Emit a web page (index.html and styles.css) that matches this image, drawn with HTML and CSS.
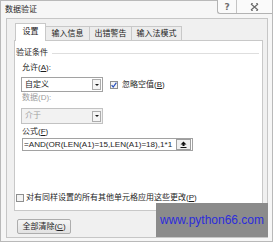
FILE: index.html
```html
<!DOCTYPE html>
<html lang="zh">
<head>
<meta charset="utf-8">
<link rel="stylesheet" href="styles.css">
</head>
<body>
<div class="window">
  <div class="titlebar">
    <span class="title">数据验证</span>
    <div class="caption">
      <span class="cap help">?</span>
      <span class="cap close"><svg width="9" height="8" viewBox="0 0 9 8"><path d="M1 1 L8 7 M8 1 L1 7" stroke="#6a6a6a" stroke-width="1.2" fill="none"/><path d="M1 0.5h2M6 0.5h2M1 7.5h2M6 7.5h2" stroke="#8a8a8a" stroke-width="1" fill="none"/></svg></span>
    </div>
  </div>
  <div class="client">
    <div class="tabs">
      <div class="tab active w1">设置</div>
      <div class="tab w2">输入信息</div>
      <div class="tab w3">出错警告</div>
      <div class="tab w4">输入法模式</div>
    </div>
    <div class="panel">
      <div class="group"><span>验证条件</span><i class="rule"></i></div>
      <div class="label">允许(<u>A</u>):</div>
      <div class="row">
        <div class="combo"><span class="val">自定义</span><b class="arrow"><i class="tri"></i></b></div>
        <div class="check"><span class="box"><svg width="6" height="6" viewBox="0 0 6 6"><path d="M0.6 3.2 L2.2 5 L5.4 0.6" stroke="#2a52be" stroke-width="1.2" fill="none"/></svg></span><span>忽略空值(<u>B</u>)</span></div>
      </div>
      <div class="label dim">数据(D):</div>
      <div class="combo disabled"><span class="val">介于</span><b class="arrow"><i class="tri"></i></b></div>
      <div class="label low">公式(<u>F</u>)</div>
      <div class="refedit"><span class="formula">=AND(OR(LEN(A1)=15,LEN(A1)=18),1*1</span><b class="collapse"><svg width="7" height="7" viewBox="0 0 7 7"><path d="M3.5 0.5 L6.5 3.5 H4.5 V5 H2.5 V3.5 H0.5 Z" fill="#111"/><path d="M0.5 6.5 H6.5" stroke="#111" stroke-width="1"/></svg></b></div>
      <div class="check apply"><span class="box"></span><span>对有同样设置的所有其他单元格应用这些更改(<u>P</u>)</span></div>
    </div>
    <div class="footer"><span class="btn">全部清除(<u>C</u>)</span></div>
  </div>
  <div class="watermark">www.python66.com</div>
</div>
</body>
</html>
```
FILE: styles.css
```css
* { box-sizing: border-box; }
html, body { margin: 0; padding: 0; }
body {
  width: 273px;
  height: 242px;
  overflow: hidden;
  background: #ffffff;
  font-family: "Liberation Sans", "Noto Sans CJK SC", sans-serif;
  font-size: 8px;
  color: #1e1e1e;
}
u { text-decoration: underline; text-underline-offset: 1px; }

.window {
  position: relative;
  width: 273px;
  height: 242px;
  border: 1px solid #b9b9b9;
  background: #f6f6f6;
  padding: 0 4px 3px 5px;
  display: flex;
  flex-direction: column;
}

.titlebar {
  height: 17px;
  display: flex;
  align-items: flex-start;
  justify-content: space-between;
}
.title {
  margin-top: 4px;
  margin-left: -1px;
  line-height: 10px;
  color: #262626;
}
.caption {
  display: flex;
  margin-top: -1px;
  margin-right: -4px;
  height: 14px;
  border: 1px solid #b3b3b3;
  border-top: none;
  border-right: none;
  border-radius: 0 0 0 3px;
  background: #fafafa;
}
.cap {
  display: flex;
  align-items: center;
  justify-content: center;
  height: 100%;
}
.help {
  width: 19px;
  border-right: 1px solid #c4c4c4;
  color: #6e6e6e;
  font-family: "DejaVu Sans", sans-serif;
  font-size: 9px;
  font-weight: bold;
}
.close { width: 35px; }

.client {
  flex: 1;
  border: 1px solid #c6c6c6;
  background: #f0f0f0;
  padding: 4px 4px 0 7px;
  display: flex;
  flex-direction: column;
}

.tabs {
  display: flex;
  align-items: flex-end;
  height: 17px;
  margin-left: 1px;
  position: relative;
  z-index: 1;
}
.tab {
  height: 14px;
  margin-left: -1px;
  border: 1px solid #c8c8c8;
  border-bottom: none;
  background: #ececec;
  line-height: 13px;
  text-align: center;
  color: #202020;
}
.tab:first-child { margin-left: 0; }
.tab.active {
  height: 18px;
  margin-bottom: -1px;
  background: #ffffff;
  line-height: 15px;
  position: relative;
  z-index: 2;
}
.w1 { width: 31px; }
.w2 { width: 45px; }
.w3 { width: 43px; }
.w4 { width: 51px; }

.panel {
  width: 249px;
  height: 171px;
  border: 1px solid #c8c8c8;
  background: #ffffff;
  padding: 0 0 0 7px;
  display: flex;
  flex-direction: column;
}

.group {
  display: flex;
  align-items: center;
  margin: 7px 3px 0 -6px;
  height: 10px;
  line-height: 10px;
}
.rule {
  flex: 1;
  height: 1px;
  background: #dedede;
  margin-left: 4px;
}

.label {
  margin-top: 5px;
  line-height: 10px;
  height: 10px;
}
.label.dim { margin-top: 1px; color: #9c9c9c; }
.label.low { margin-top: 3px; }

.row {
  display: flex;
  align-items: center;
  margin-top: 4px;
  height: 15px;
}

.combo {
  width: 82px;
  height: 15px;
  margin-left: -1px;
  border: 1px solid #a2a2a2;
  background: #ffffff;
  display: flex;
  align-items: center;
  justify-content: space-between;
  padding: 0 1px 0 3px;
}
.combo.disabled {
  margin-top: 5px;
  height: 16px;
  border-color: #c2c2c2;
  background: #f2f2f2;
  color: #a0a0a0;
}
.val { line-height: 10px; }
.arrow {
  width: 9px;
  height: 11px;
  border: 1px solid #acacac;
  background: #f4f4f4;
  display: flex;
  align-items: center;
  justify-content: center;
}
.tri {
  width: 0;
  height: 0;
  border-left: 2px solid transparent;
  border-right: 2px solid transparent;
  border-top: 2px solid #1a1a1a;
}

.check {
  display: flex;
  align-items: center;
  margin-left: 7px;
  line-height: 10px;
}
.box {
  width: 8px;
  height: 8px;
  border: 1px solid #8e8f8f;
  background: #f4f4f4;
  margin-right: 4px;
  display: flex;
  align-items: center;
  justify-content: center;
}
.apply {
  margin: auto 0 7px -6px;
}
.apply .box { margin-right: 2px; }

.refedit {
  margin-top: 1px;
  width: 171px;
  height: 13px;
  border: 1px solid #a2a2a2;
  background: #ffffff;
  display: flex;
  align-items: center;
  padding-left: 1px;
  padding-right: 1px;
}
.formula {
  flex: 1;
  overflow: hidden;
  white-space: nowrap;
  line-height: 10px;
  font-size: 8.1px;
}
.collapse {
  width: 15px;
  height: 11px;
  margin-left: 1px;
  border: 1px solid #9e9e9e;
  background: #f0f0f0;
  display: flex;
  align-items: center;
  justify-content: center;
}

.footer {
  margin-top: 8px;
  padding-left: 3px;
}
.btn {
  display: flex;
  align-items: center;
  justify-content: center;
  width: 54px;
  height: 15px;
  border: 1px solid #adadad;
  border-radius: 2px;
  background: linear-gradient(#f4f4f4, #e2e2e2);
  line-height: 10px;
}

.watermark {
  position: absolute;
  left: 155px;
  top: 202px;
  width: 112px;
  height: 34px;
  background: #8b8b8b;
  color: #2b2bdc;
  font-family: "Liberation Sans", sans-serif;
  font-size: 12px;
  display: flex;
  align-items: center;
  justify-content: center;
}
```
